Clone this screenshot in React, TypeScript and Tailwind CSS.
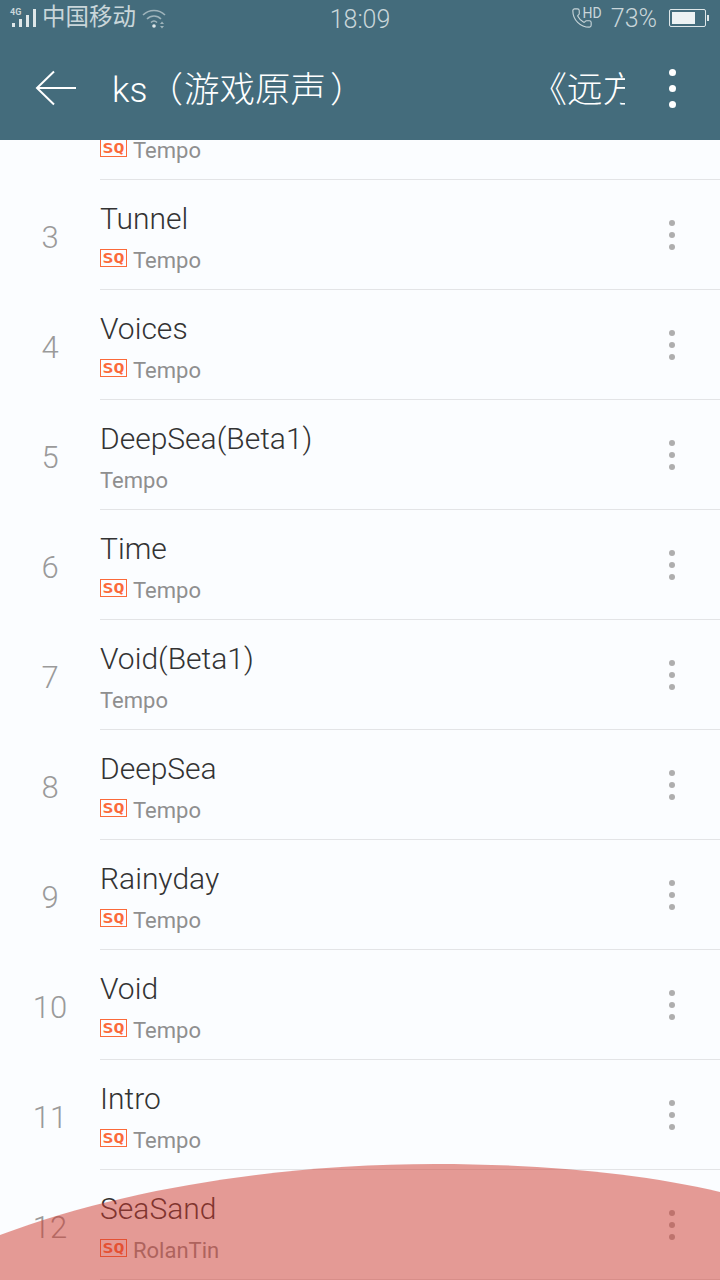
import React from 'react';
import { Phone } from 'lucide-react';

const tracks = [
  { n: 2, title: '', artist: 'Tempo', sq: true },
  { n: 3, title: 'Tunnel', artist: 'Tempo', sq: true },
  { n: 4, title: 'Voices', artist: 'Tempo', sq: true },
  { n: 5, title: 'DeepSea(Beta1)', artist: 'Tempo', sq: false },
  { n: 6, title: 'Time', artist: 'Tempo', sq: true },
  { n: 7, title: 'Void(Beta1)', artist: 'Tempo', sq: false },
  { n: 8, title: 'DeepSea', artist: 'Tempo', sq: true },
  { n: 9, title: 'Rainyday', artist: 'Tempo', sq: true },
  { n: 10, title: 'Void', artist: 'Tempo', sq: true },
  { n: 11, title: 'Intro', artist: 'Tempo', sq: true },
  { n: 12, title: 'SeaSand', artist: 'RolanTin', sq: true },
];

const SqBadge = () => (
  <span className="mr-[6px] mb-[6px] flex h-[18px] w-[27px] items-center justify-center border border-[#fb6a3a] text-[14px] leading-none font-bold text-[#fb6a3a] [font-family:'DejaVu_Sans_Mono',monospace]">
    <span className="inline-block scale-x-[1.3]">SQ</span>
  </span>
);

const StatusBar = () => (
  <div className="flex h-[40px] items-center pb-[4px] text-[#c9d6da]">
    <div className="flex w-[300px] items-center pl-[10px]">
      <div className="relative mr-[6px] h-[20px] w-[26px]">
        <span className="absolute top-[-1px] left-0 text-[9px] leading-[10px] font-bold">4G</span>
        <div className="absolute right-0 bottom-[1px] flex items-end gap-[4px]">
          <i className="h-[4px] w-[3px] bg-[#dfe7e9]" />
          <i className="h-[8px] w-[3px] bg-[#dfe7e9]" />
          <i className="h-[12px] w-[3px] bg-[#dfe7e9]" />
          <i className="h-[18px] w-[3px] bg-[#dfe7e9]" />
        </div>
      </div>
      <span className="text-[23.500px] leading-none">中国移动</span>
      <svg width="26" height="22" viewBox="0 0 26 22" fill="none" stroke="#9fb4bb" strokeWidth="1.6" className="ml-[6px]">
        <path d="M1 8c6-6 16-6 22 0" />
        <path d="M5 12c4-4 10-4 14 0" />
        <path d="M9 15.5c2-2 4-2 6 0" />
        <circle cx="12" cy="19" r="1.8" fill="#dfe7e9" stroke="none" />
        <path d="M18 17h4l-2-2.5zM18 19h4l-2 2.5z" fill="#9fb4bb" stroke="none" />
      </svg>
    </div>
    <div className="mt-[2px] w-[120px] text-center text-[25px] leading-none font-light">18:09</div>
    <div className="flex flex-1 items-center justify-end pr-[11px]">
      <div className="relative mr-[10px] h-[24px] w-[30px]">
        <Phone size={22} strokeWidth={1.2} className="absolute top-[1px] left-0" />
        <span className="absolute top-[0px] right-[-1px] text-[14px] leading-none">HD</span>
      </div>
      <span className="mr-[12px] text-[25px] leading-none font-light">73%</span>
      <div className="flex items-center">
        <div className="h-[18px] w-[37px] rounded-[2px] border border-[#dfe7e9] p-[2px]">
          <div className="h-full w-[23px] bg-[#edf2f3]" />
        </div>
        <div className="ml-[1px] h-[6px] w-[2px] bg-[#dfe7e9]" />
      </div>
    </div>
  </div>
);

const Toolbar = () => (
  <div className="flex h-[100px] items-center">
    <button className="mb-[5px] flex w-[112px] shrink-0 items-center pl-[35px]">
      <svg width="42" height="36" viewBox="0 0 42 36" fill="none" stroke="#fff" strokeWidth="2">
        <path d="M41 18H2" />
        <path d="M19 1.5 2 18l17 16.500" />
      </svg>
    </button>
    <div className="flex h-[46px] w-[513px] items-center overflow-hidden text-[35.500px] leading-[46px] font-light whitespace-nowrap text-white">
      <span>ks（</span>
      <span className="ml-[1px]">游戏原声</span>
      <span className="ml-[4px]">）</span>
      <span className="ml-[166px]">《远方</span>
    </div>
    <button className="mb-[4px] flex flex-1 flex-col items-center gap-[9px] pr-[1px]">
      <i className="h-[7px] w-[7px] rounded-full bg-white" />
      <i className="h-[7px] w-[7px] rounded-full bg-white" />
      <i className="h-[7px] w-[7px] rounded-full bg-white" />
    </button>
  </div>
);

export default function App() {
  return (
    <div className="relative flex h-[1280px] w-[720px] flex-col overflow-hidden bg-[#fbfdff] [font-family:Roboto,'Noto_Sans_CJK_SC',sans-serif]">
      <header className="relative z-10 shrink-0 bg-[#446c7c]">
        <StatusBar />
        <Toolbar />
      </header>
      <div className="flex-1 overflow-hidden">
        <ul className="-mt-[70px]">
          {tracks.map(t => (
            <li key={t.n} className="flex h-[110px]">
              <div className="flex w-[100px] shrink-0 justify-center pt-[38px] text-[31px] leading-[40px] font-light text-[#9a9a9a]">
                {t.n}
              </div>
              <div className="flex flex-1 border-b border-[#e3e4e6]">
                <div className="flex-1 pt-[19px]">
                  <div className="h-[40px] text-[30px] leading-[40px] font-light text-[#333]">{t.title}</div>
                  <div className="mt-[7px] flex h-[30px] items-center text-[22px] leading-[30px] text-[#8f8f8f]">
                    {t.sq && <SqBadge />}
                    {t.artist}
                  </div>
                </div>
                <div className="flex w-[96px] flex-col items-center justify-center gap-[6px]">
                  <i className="h-[6px] w-[6px] rounded-full bg-[#aeaeae]" />
                  <i className="h-[6px] w-[6px] rounded-full bg-[#aeaeae]" />
                  <i className="h-[6px] w-[6px] rounded-full bg-[#aeaeae]" />
                </div>
              </div>
            </li>
          ))}
        </ul>
      </div>
      <svg width="720" height="116" viewBox="0 0 720 116" className="pointer-events-none absolute bottom-0 left-0">
        <path d="M0 71C130 22 290 0 435 0C540 0 640 9 720 28V116H0Z" fill="#ce382c" fillOpacity="0.5" />
      </svg>
    </div>
  );
}
